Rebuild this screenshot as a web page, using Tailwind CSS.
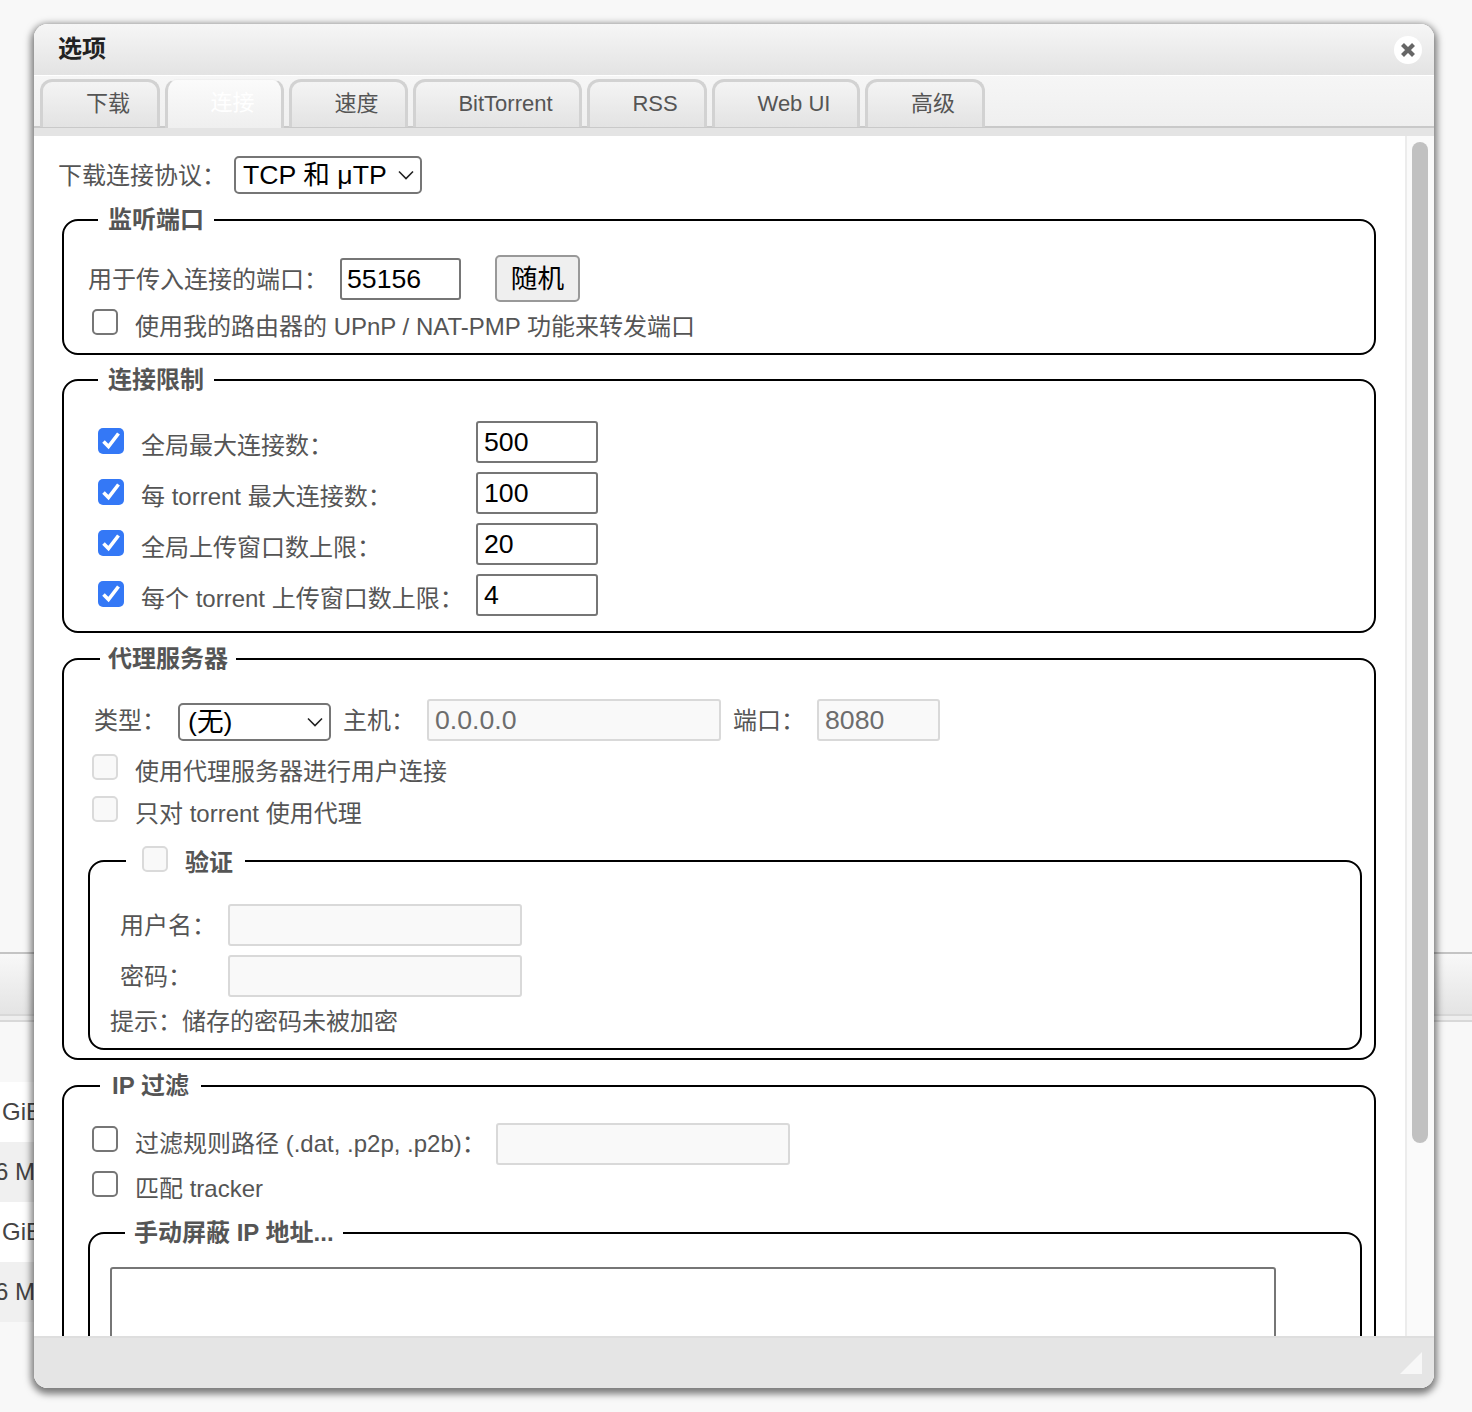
<!DOCTYPE html>
<html lang="zh-CN">
<head>
<meta charset="utf-8">
<title>选项</title>
<script src="https://cdn.jsdelivr.net/npm/@tailwindcss/browser@4"></script>
</head>
<body class="font-['Liberation_Sans','Noto_Sans_CJK_SC',sans-serif] text-[24px] text-[#555] bg-[#f8f8f8]">
<div class="relative w-[1472px] h-[1412px] overflow-hidden bg-[#f8f8f8]">
  <!-- page behind -->
  <div class="pt-[952px]">
    <div class="h-[2px] bg-[#c4c4c4]"></div>
    <div class="h-[60px] bg-gradient-to-b from-[#f8f8f8] to-[#e4e4e4]"></div>
    <div class="h-[8px] border-y-2 border-[#d8d8d8] bg-[#eeeeee]"></div>
    <div class="h-[60px]"></div>
    <div class="w-[200px] h-[60px] bg-white leading-[60px] text-[#444] pl-[2px]">GiB</div>
    <div class="w-[200px] h-[60px] bg-[#f0f0f0] leading-[60px] text-[#444] -ml-[5px]">6 MiB</div>
    <div class="w-[200px] h-[60px] bg-white leading-[60px] text-[#444] pl-[2px]">GiB</div>
    <div class="w-[200px] h-[60px] bg-[#f0f0f0] leading-[60px] text-[#444] -ml-[5px]">6 MiB</div>
  </div>

  <!-- window shadow -->
  <div class="absolute left-[34px] top-[24px] w-[1400px] h-[1364px] rounded-[14px] shadow-[0_3px_7px_3px_rgba(0,0,0,0.5)]"></div>
  <!-- window -->
  <div class="absolute left-[34px] top-[24px] w-[1400px] h-[1364px] rounded-[14px] overflow-hidden bg-white flex flex-col">
    <div class="h-[51px] shrink-0 bg-gradient-to-b from-[#f6f6f6] to-[#e3e3e3] flex items-center justify-between pl-[24px] pr-[12px]">
      <span class="font-bold text-[#222] leading-[46px] pb-[2px]">选项</span>
      <span class="w-[28px] h-[28px] rounded-full bg-white flex items-center justify-center">
        <svg width="18" height="18" viewBox="0 0 18 18"><path d="M3.5 3.5L14.5 14.5M14.5 3.5L3.5 14.5" stroke="#666" stroke-width="4.2" stroke-linecap="butt"/></svg>
      </span>
    </div>
    <div class="h-[1px] bg-white shrink-0"></div>
    <div class="h-[60px] shrink-0 bg-gradient-to-b from-[#f6f6f6] to-[#efefef] border-b-[8px] border-[#e4e4e4] relative">
      <div class="absolute left-0 right-0 bottom-0 h-[2px] bg-[#c9c9c9]"></div>
      <div class="relative flex pl-[6px] pt-[3px] gap-[5px] h-[52px] text-[22px]">
        <div class="w-[120px] h-[48px] pl-[16px] text-center leading-[44px] rounded-t-[12px] border-[3px] border-b-0 border-[#d2d2d2] bg-gradient-to-b from-[#f4f4f4] to-[#e3e3e3]">下载</div>
        <div class="w-[119px] h-[49px] pl-[16px] text-center leading-[46px] rounded-t-[12px] border-x-[3px] border-t-[1px] border-[#d2d2d2] border-t-[#f0f0f0] bg-gradient-to-b from-[#fbfbfb] to-[#efefef] text-white">连接</div>
        <div class="w-[119px] h-[48px] pl-[16px] text-center leading-[44px] rounded-t-[12px] border-[3px] border-b-0 border-[#d2d2d2] bg-gradient-to-b from-[#f4f4f4] to-[#e3e3e3]">速度</div>
        <div class="w-[169px] h-[48px] pl-[16px] text-center leading-[44px] rounded-t-[12px] border-[3px] border-b-0 border-[#d2d2d2] bg-gradient-to-b from-[#f4f4f4] to-[#e3e3e3]">BitTorrent</div>
        <div class="w-[120px] h-[48px] pl-[16px] text-center leading-[44px] rounded-t-[12px] border-[3px] border-b-0 border-[#d2d2d2] bg-gradient-to-b from-[#f4f4f4] to-[#e3e3e3]">RSS</div>
        <div class="w-[148px] h-[48px] pl-[16px] text-center leading-[44px] rounded-t-[12px] border-[3px] border-b-0 border-[#d2d2d2] bg-gradient-to-b from-[#f4f4f4] to-[#e3e3e3]">Web UI</div>
        <div class="w-[120px] h-[48px] pl-[16px] text-center leading-[44px] rounded-t-[12px] border-[3px] border-b-0 border-[#d2d2d2] bg-gradient-to-b from-[#f4f4f4] to-[#e3e3e3]">高级</div>
      </div>
    </div>
    <div class="h-[1200px] shrink-0 flex overflow-hidden">
      <div class="w-[1371px] shrink-0 h-[1200px] overflow-hidden pl-[28px] pr-[29px]">
        <div class="flex items-center pt-[20px] h-[58px]">
          <span class="-ml-[4px] w-[176px] shrink-0 pt-[2px]">下载连接协议：</span>
          <div class="relative w-[188px] h-[38px]">
            <select class="appearance-none w-full h-full border-2 border-[#767676] rounded-[5px] bg-white text-black text-[26.67px] pl-[7px] leading-[30px]"><option>TCP 和 μTP</option></select>
            <svg class="absolute right-[8px] top-[14px]" width="16" height="10" viewBox="0 0 16 10" fill="none"><path d="M1 1.5L8 8.5L15 1.5" stroke="#222" stroke-width="1.6"/></svg>
          </div>
        </div>

        <fieldset class="border-2 border-black rounded-[16px] pl-[24px] pr-[24px] mt-[12px] h-[149px] min-w-0">
          <legend class="ml-[10px] px-[10px] font-bold leading-[28px]">监听端口</legend>
          <div class="flex items-center h-[47px] mt-[21px]">
            <span class="w-[252px] shrink-0 pt-[2px]">用于传入连接的端口：</span>
            <input type="text" value="55156" class="w-[121px] h-[42px] border-2 border-[#767676] rounded-[3px] bg-white text-black text-[26.67px] pl-[5px] pr-[6px] mt-[1px]">
            <button class="ml-[34px] w-[85px] h-[47px] border-2 border-[#999] rounded-[5px] bg-[#efefef] text-black text-[26.67px]">随机</button>
          </div>
          <div class="flex items-start mt-[7px] pl-[4px]">
            <input type="checkbox" class="appearance-none w-[26px] h-[26px] shrink-0 border-2 border-[#767676] rounded-[5px] bg-white">
            <span class="ml-[17px] leading-[28px] mt-[4px]">使用我的路由器的 UPnP / NAT-PMP 功能来转发端口</span>
          </div>
        </fieldset>

        <fieldset class="border-2 border-black rounded-[16px] pl-[34px] mt-[11px] h-[267px] min-w-0">
          <legend class="px-[10px] font-bold leading-[28px]">连接限制</legend>
          <div class="grid grid-cols-[26px_352px_122px] auto-rows-[42px] gap-y-[9px] mt-[27px] items-center">
            <div class="relative w-[26px] h-[26px] -mt-[3px]"><input type="checkbox" checked class="appearance-none block w-[26px] h-[26px] rounded-[5px] bg-[#3478f6]"><svg class="absolute left-0 top-0" width="26" height="26" viewBox="0 0 26 26" fill="none"><path d="M5.5 13.5L10.5 18.5L20.5 5.5" stroke="#fff" stroke-width="3.6"/></svg></div>
            <span class="ml-[17px] pt-[7px]">全局最大连接数：</span>
            <input type="text" value="500" class="w-[122px] h-[42px] border-2 border-[#767676] rounded-[3px] bg-white text-black text-[26.67px] px-[6px]">
            <div class="relative w-[26px] h-[26px] -mt-[3px]"><input type="checkbox" checked class="appearance-none block w-[26px] h-[26px] rounded-[5px] bg-[#3478f6]"><svg class="absolute left-0 top-0" width="26" height="26" viewBox="0 0 26 26" fill="none"><path d="M5.5 13.5L10.5 18.5L20.5 5.5" stroke="#fff" stroke-width="3.6"/></svg></div>
            <span class="ml-[17px] pt-[7px]">每 torrent 最大连接数：</span>
            <input type="text" value="100" class="w-[122px] h-[42px] border-2 border-[#767676] rounded-[3px] bg-white text-black text-[26.67px] px-[6px]">
            <div class="relative w-[26px] h-[26px] -mt-[3px]"><input type="checkbox" checked class="appearance-none block w-[26px] h-[26px] rounded-[5px] bg-[#3478f6]"><svg class="absolute left-0 top-0" width="26" height="26" viewBox="0 0 26 26" fill="none"><path d="M5.5 13.5L10.5 18.5L20.5 5.5" stroke="#fff" stroke-width="3.6"/></svg></div>
            <span class="ml-[17px] pt-[7px]">全局上传窗口数上限：</span>
            <input type="text" value="20" class="w-[122px] h-[42px] border-2 border-[#767676] rounded-[3px] bg-white text-black text-[26.67px] px-[6px]">
            <div class="relative w-[26px] h-[26px] -mt-[3px]"><input type="checkbox" checked class="appearance-none block w-[26px] h-[26px] rounded-[5px] bg-[#3478f6]"><svg class="absolute left-0 top-0" width="26" height="26" viewBox="0 0 26 26" fill="none"><path d="M5.5 13.5L10.5 18.5L20.5 5.5" stroke="#fff" stroke-width="3.6"/></svg></div>
            <span class="ml-[17px] pt-[7px]">每个 torrent 上传窗口数上限：</span>
            <input type="text" value="4" class="w-[122px] h-[42px] border-2 border-[#767676] rounded-[3px] bg-white text-black text-[26.67px] px-[6px]">
          </div>
        </fieldset>

        <fieldset class="border-2 border-black rounded-[16px] pl-[30px] pr-[12px] mt-[12px] h-[415px] min-w-0">
          <legend class="ml-[6px] px-[8px] font-bold leading-[28px]">代理服务器</legend>
          <div class="flex items-center h-[42px] mt-[26px]">
            <span class="w-[84px] shrink-0 pt-[2px]">类型：</span>
            <div class="relative w-[153px] h-[38px] shrink-0 mt-[4px]">
              <select class="appearance-none w-full h-full border-2 border-[#767676] rounded-[5px] bg-white text-black text-[26.67px] pl-[8px] leading-[30px]"><option>(无)</option></select>
              <svg class="absolute right-[8px] top-[14px]" width="16" height="10" viewBox="0 0 16 10" fill="none"><path d="M1 1.5L8 8.5L15 1.5" stroke="#222" stroke-width="1.6"/></svg>
            </div>
            <span class="ml-[12px] w-[84px] shrink-0 pt-[2px]">主机：</span>
            <input type="text" disabled value="0.0.0.0" class="w-[294px] h-[42px] border-2 border-[#d9d9d9] rounded-[3px] bg-[#f9f9f9] text-[#6d6d6d] text-[26.67px] px-[6px]">
            <span class="ml-[12px] w-[84px] shrink-0 pt-[2px]">端口：</span>
            <input type="text" disabled value="8080" class="w-[123px] h-[42px] border-2 border-[#d9d9d9] rounded-[3px] bg-[#f9f9f9] text-[#6d6d6d] text-[26.67px] px-[6px]">
          </div>
          <div class="flex items-start mt-[13px] -ml-[2px]">
            <input type="checkbox" disabled class="appearance-none w-[26px] h-[26px] shrink-0 border-2 border-[#dadada] rounded-[5px] bg-[#f9f9f9]">
            <span class="ml-[17px] leading-[28px] mt-[4px]">使用代理服务器进行用户连接</span>
          </div>
          <div class="flex items-start mt-[10px] -ml-[2px]">
            <input type="checkbox" disabled class="appearance-none w-[26px] h-[26px] shrink-0 border-2 border-[#dadada] rounded-[5px] bg-[#f9f9f9]">
            <span class="ml-[17px] leading-[28px] mt-[4px]">只对 torrent 使用代理</span>
          </div>
          <fieldset class="border-2 border-black rounded-[16px] -ml-[6px] mt-[17px] pl-[30px] h-[205px] min-w-0">
            <legend class="ml-[6px] pl-[16px] pr-[12px] font-bold leading-[28px] flex items-center">
              <input type="checkbox" disabled class="appearance-none w-[26px] h-[26px] shrink-0 border-2 border-[#dadada] rounded-[5px] bg-[#f9f9f9] -mt-[4px]">
              <span class="ml-[17px] pt-[4px]">验证</span>
            </legend>
            <div class="flex items-center h-[42px] mt-[27px]">
              <span class="w-[108px] shrink-0 pt-[2px]">用户名：</span>
              <input type="text" disabled class="w-[294px] h-[42px] border-2 border-[#d9d9d9] rounded-[3px] bg-[#f9f9f9]">
            </div>
            <div class="flex items-center h-[42px] mt-[9px]">
              <span class="w-[108px] shrink-0 pt-[2px]">密码：</span>
              <input type="text" disabled class="w-[294px] h-[42px] border-2 border-[#d9d9d9] rounded-[3px] bg-[#f9f9f9]">
            </div>
            <div class="-ml-[10px] mt-[8px] leading-[34px]">提示：储存的密码未被加密</div>
          </fieldset>
        </fieldset>

        <fieldset class="border-2 border-black rounded-[16px] pl-[28px] pr-[12px] mt-[12px] h-[400px] min-w-0">
          <legend class="ml-[8px] px-[12px] font-bold leading-[28px]">IP 过滤</legend>
          <div class="flex items-start mt-[23px]">
            <input type="checkbox" class="appearance-none w-[26px] h-[26px] mt-[3px] shrink-0 border-2 border-[#767676] rounded-[5px] bg-white">
            <span class="ml-[17px] leading-[28px] mt-[7px] w-[361px] shrink-0">过滤规则路径 (.dat, .p2p, .p2b)：</span>
            <input type="text" disabled class="w-[294px] h-[42px] border-2 border-[#d9d9d9] rounded-[3px] bg-[#f9f9f9]">
          </div>
          <div class="flex items-start mt-[6px]">
            <input type="checkbox" class="appearance-none w-[26px] h-[26px] shrink-0 border-2 border-[#767676] rounded-[5px] bg-white">
            <span class="ml-[17px] leading-[28px] mt-[4px]">匹配 tracker</span>
          </div>
          <fieldset class="border-2 border-black rounded-[16px] -ml-[4px] mt-[16px] pl-[20px] h-[300px] min-w-0">
            <legend class="ml-[15px] px-[9px] font-bold leading-[28px]">手动屏蔽 IP 地址...</legend>
            <textarea class="block w-[1166px] h-[200px] mt-[20px] border-2 border-[#767676] rounded-[3px] bg-white"></textarea>
          </fieldset>
        </fieldset>
      </div>
      <div class="w-[29px] shrink-0 border-l-2 border-[#ececec] bg-[#fafafa] pl-[5px] pt-[6px]">
        <div class="w-[16px] h-[1001px] rounded-full bg-[#c1c1c1]"></div>
      </div>
    </div>
    <div class="flex-1 bg-[#e5e5e5] border-t-2 border-[#dedede] flex items-end justify-end pr-[12px] pb-[14px]">
      <svg width="22" height="22" viewBox="0 0 22 22"><path d="M22 0V22H0Z" fill="#f7f7f7"/></svg>
    </div>
  </div>
</div>
</body>
</html>
